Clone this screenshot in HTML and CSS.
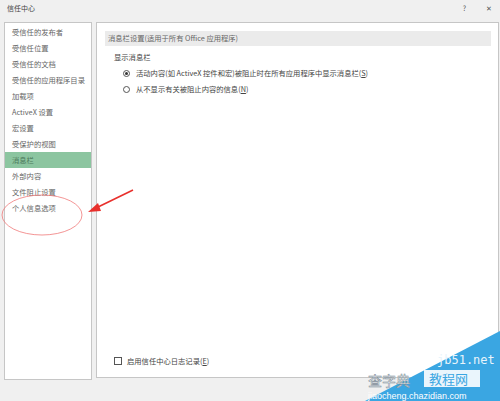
FILE: index.html
```html
<!DOCTYPE html>
<html lang="zh-CN">
<head>
<meta charset="utf-8">
<link rel="stylesheet" href="styles.css">
</head>
<body>
<div class="dialog">
  <div class="titlebar">
    <span class="title">信任中心</span>
    <span class="tbtns"><span class="help">?</span><span class="close">✕</span></span>
  </div>
  <div class="main">
    <div class="nav">
      <div class="item">受信任的发布者</div>
      <div class="item">受信任位置</div>
      <div class="item">受信任的文档</div>
      <div class="item">受信任的应用程序目录</div>
      <div class="item">加载项</div>
      <div class="item">ActiveX 设置</div>
      <div class="item">宏设置</div>
      <div class="item">受保护的视图</div>
      <div class="item sel">消息栏</div>
      <div class="item">外部内容</div>
      <div class="item">文件阻止设置</div>
      <div class="item">个人信息选项</div>
    </div>
    <div class="content">
      <div class="section">消息栏设置(适用于所有 Office 应用程序)</div>
      <div class="label">显示消息栏</div>
      <div class="opt"><span class="radio on"></span>活动内容(如 ActiveX 控件和宏)被阻止时在所有应用程序中显示消息栏(<u>S</u>)</div>
      <div class="opt"><span class="radio"></span>从不显示有关被阻止内容的信息(<u>N</u>)</div>
      <div class="bottom"><span class="check"></span>启用信任中心日志记录(<u>E</u>)</div>
    </div>
  </div>
</div>
<svg class="overlay" width="500" height="401" viewBox="0 0 500 401">
  <ellipse cx="42" cy="215" rx="40" ry="20" fill="none" stroke="#f07a7a" stroke-width="0.8"/>
  <path d="M133 190 L96 208" stroke="#e8302c" stroke-width="1.6" fill="none"/>
  <polygon points="88,212 98,203 101,211" fill="#e8302c"/>
  <polygon points="365,401 500,331 500,401" fill="#3aa6e2"/>
  <text x="437" y="364" class="wm1">jb51.net</text>
  <text x="368" y="386" class="wm2">查字典</text>
  <rect x="424" y="370" width="56" height="17" fill="#eaf5fc"/>
  <text x="429" y="384" class="wm3">教程网</text>
  <text x="368" y="399" class="wm4">jiaocheng.chazidian.com</text>
</svg>
</body>
</html>
```
FILE: styles.css
```css
html, body {
  margin: 0;
  padding: 0;
}
body {
  width: 500px;
  height: 401px;
  background: #f0f0f0;
  font-family: "Noto Sans CJK SC", "Liberation Sans", sans-serif;
  color: #555;
  overflow: hidden;
  position: relative;
}
.dialog {
  display: flex;
  flex-direction: column;
  height: 401px;
}
.titlebar {
  height: 22px;
  display: flex;
  justify-content: space-between;
  align-items: flex-start;
  padding: 2px 8px 0 7px;
  box-sizing: border-box;
}
.title {
  font-size: 7px;
  line-height: 12px;
  color: #444;
}
.tbtns {
  display: flex;
  gap: 20px;
  font-size: 7px;
  line-height: 12px;
  color: #555;
}
.main {
  display: flex;
  align-items: flex-start;
  gap: 4px;
  padding-left: 4px;
}
.nav {
  width: 88px;
  height: 358px;
  box-sizing: border-box;
  background: #fff;
  border: 1px solid #c6c6c6;
  padding: 1px 0 0 0;
}
.item {
  height: 16px;
  line-height: 16px;
  font-size: 7.3px;
  padding-left: 7px;
  color: #666;
  white-space: nowrap;
}
.item.sel {
  background: #8cc5a0;
  color: #4d7a5b;
}
.content {
  width: 403px;
  height: 356px;
  box-sizing: border-box;
  background: #fff;
  border: 1px solid #c6c6c6;
  padding: 8px 7px 11px 8px;
  display: flex;
  flex-direction: column;
}
.section {
  height: 15px;
  line-height: 15px;
  background: #ebebeb;
  font-size: 7.3px;
  padding-left: 3px;
  color: #666;
}
.label {
  margin-top: 3px;
  padding-left: 9px;
  font-size: 7.3px;
  line-height: 16px;
  color: #444;
}
.opt {
  display: flex;
  align-items: center;
  height: 16px;
  font-size: 7.3px;
  padding-left: 18px;
  color: #444;
  white-space: nowrap;
}
.radio {
  width: 7px;
  height: 7px;
  border: 1px solid #555;
  border-radius: 50%;
  box-sizing: border-box;
  margin-right: 6px;
  position: relative;
  flex: none;
}
.radio.on::after {
  content: "";
  position: absolute;
  left: 1px;
  top: 1px;
  width: 3px;
  height: 3px;
  border-radius: 50%;
  background: #333;
}
u { text-decoration: underline; }
.bottom {
  margin-top: auto;
  display: flex;
  align-items: center;
  padding-left: 9px;
  font-size: 7.3px;
  color: #444;
  white-space: nowrap;
}
.check {
  width: 8px;
  height: 8px;
  border: 1px solid #555;
  box-sizing: border-box;
  margin-right: 5px;
  flex: none;
}
.overlay {
  position: absolute;
  left: 0;
  top: 0;
}
.wm1 {
  font-family: "DejaVu Sans Mono", monospace;
  font-size: 12px;
  fill: #e8f4fb;
}
.wm2 {
  font-family: "Noto Sans CJK SC", sans-serif;
  font-size: 14px;
  fill: #fff;
  stroke: #7a8a96;
  stroke-width: 0.5;
}
.wm3 {
  font-family: "Noto Sans CJK SC", sans-serif;
  font-size: 13px;
  fill: #3aa6e2;
}
.wm4 {
  font-family: "Liberation Sans", sans-serif;
  font-size: 9px;
  fill: #fff;
}
```
